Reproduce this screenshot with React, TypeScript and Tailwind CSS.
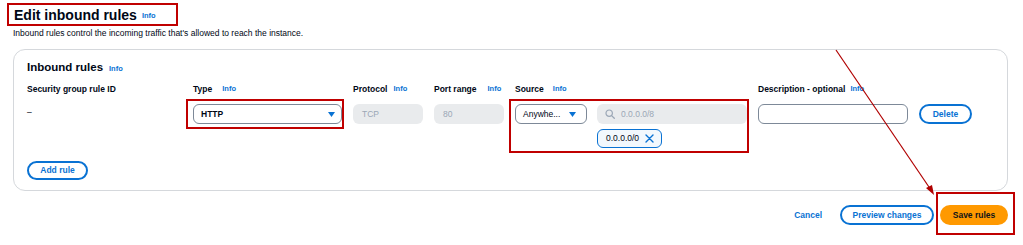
import React from "react";

const Info = ({ className = "" }: { className?: string }) => (
  <span className={`text-[7.5px] font-bold text-[#0972d3] ${className}`}>Info</span>
);

const Caret = () => (
  <svg width="7" height="5" viewBox="0 0 7 5" className="shrink-0">
    <path d="M0 0 H7 L3.5 5 Z" fill="#0972d3" />
  </svg>
);

export default function App() {
  return (
    <div
      className="relative w-[1023px] h-[245px] bg-white overflow-hidden text-[#000716]"
      style={{ fontFamily: '"Liberation Sans", Arial, sans-serif' }}
    >
      {/* Title */}
      <div className="ml-[7px] mt-[3px] flex h-[23px] w-[171px] items-center border-2 border-[#c00000] pl-[5px]">
        <span className="text-[14px] font-bold leading-none">Edit inbound rules</span>
        <Info className="ml-[5px] mt-[3px]" />
      </div>
      <div className="ml-[13px] mt-[1px] text-[8.5px] leading-[12px]">
        Inbound rules control the incoming traffic that's allowed to reach the instance.
      </div>

      {/* Card */}
      <div className="ml-[13px] mt-[10px] w-[995px] h-[142px] rounded-[12px] border border-[#d5d8dc] pl-[13px] pt-[10px]">
        <div className="flex h-[16px] items-center">
          <span className="text-[11.5px] font-bold leading-none">Inbound rules</span>
          <Info className="ml-[6px] mt-[2px]" />
        </div>

        <div className="mt-[7px] grid grid-cols-[155px_149px_70px_70px_232px_150px_auto] gap-x-[11px]">
          {/* headers */}
          <div className="flex h-[12px] items-center text-[8.5px] font-bold">Security group rule ID</div>
          <div className="flex h-[12px] items-center text-[8.5px] font-bold">
            Type <Info className="ml-[10px]" />
          </div>
          <div className="flex h-[12px] items-center text-[8.5px] font-bold">
            Protocol <Info className="ml-[6px]" />
          </div>
          <div className="flex h-[12px] items-center text-[8.5px] font-bold">
            Port range <Info className="ml-[11px]" />
          </div>
          <div className="flex h-[12px] items-center text-[8.5px] font-bold">
            Source <Info className="ml-[9px]" />
          </div>
          <div className="flex h-[12px] items-center text-[8.5px] font-bold">
            Description - optional <Info className="ml-[5px]" />
          </div>
          <div />

          {/* row */}
          <div className="mt-[9px] h-[20px] text-[8.5px] leading-[16px]">–</div>
          <div className="relative mt-[9px]">
            <div className="flex h-[20px] w-[149px] items-center justify-between rounded-[6px] border border-[#7d8998] pl-[7px] pr-[6px] text-[8.5px] font-bold">
              <span>HTTP</span>
              <Caret />
            </div>
            <div className="pointer-events-none absolute left-[-7px] top-[-5px] h-[30px] w-[158px] border-2 border-[#c00000]" />
          </div>
          <div className="mt-[9px] flex h-[20px] items-center rounded-[6px] bg-[#e9ebed] pl-[9px] text-[8.5px] text-[#9ba7b6]">
            TCP
          </div>
          <div className="mt-[9px] flex h-[20px] items-center rounded-[6px] bg-[#e9ebed] pl-[9px] text-[8.5px] text-[#9ba7b6]">
            80
          </div>
          <div className="relative mt-[9px]">
            <div className="flex gap-[10px]">
              <div className="flex h-[20px] w-[72px] items-center rounded-[6px] border border-[#7d8998] pl-[7px] pr-[10px] text-[8.5px]">
                <span className="flex-1">Anywhe...</span>
                <Caret />
              </div>
              <div className="flex h-[20px] w-[150px] items-center rounded-[6px] bg-[#e9ebed] pl-[8px] text-[8.5px] text-[#9ba7b6]">
                <svg width="10" height="10" viewBox="0 0 10 10" className="mr-[6px]">
                  <circle cx="4.2" cy="4.2" r="3.2" fill="none" stroke="#9ba7b6" strokeWidth="1.2" />
                  <path d="M6.6 6.6 L9.3 9.3" stroke="#9ba7b6" strokeWidth="1.3" strokeLinecap="round" />
                </svg>
                0.0.0.0/8
              </div>
            </div>
            <div className="ml-[82px] mt-[5px] flex h-[19px] w-[65px] items-center rounded-[6px] border border-[#0972d3] bg-[#f2f8fd] pl-[8px] text-[8.5px]">
              <span>0.0.0.0/0</span>
              <svg width="9" height="9" viewBox="0 0 9 9" className="ml-[6px]">
                <path d="M1 1 L8 8 M8 1 L1 8" stroke="#0972d3" strokeWidth="1.4" strokeLinecap="round" />
              </svg>
            </div>
            <div className="pointer-events-none absolute left-[-6px] top-[-5px] h-[54px] w-[240px] border-2 border-[#c00000]" />
          </div>
          <div className="mt-[9px] h-[20px] rounded-[6px] border border-[#7d8998]" />
          <div className="mt-[9px]">
            <div className="flex h-[20px] w-[53px] items-center justify-center rounded-full border-2 border-[#0972d3] text-[8.5px] font-bold text-[#0972d3]">
              Delete
            </div>
          </div>
        </div>

        <div className="mt-[13px] flex h-[19px] w-[61px] items-center justify-center rounded-full border-2 border-[#0972d3] text-[8.5px] font-bold text-[#0972d3]">
          Add rule
        </div>
      </div>

      {/* Footer */}
      <div className="mt-[14px] flex items-center justify-end pr-[15px]">
        <span className="mr-[18px] text-[8.5px] font-bold text-[#0972d3]">Cancel</span>
        <div className="flex h-[20px] w-[94px] items-center justify-center rounded-full border-2 border-[#0972d3] text-[8.5px] font-bold text-[#0972d3]">
          Preview changes
        </div>
        <div className="relative ml-[6px]">
          <div className="flex h-[20px] w-[68px] items-center justify-center rounded-full bg-[#ff9900] text-[8.5px] font-bold text-[#0f141a]">
            Save rules
          </div>
          <div className="pointer-events-none absolute left-[-4px] top-[-13px] h-[43px] w-[79px] border-2 border-[#c00000]" />
        </div>
      </div>

      {/* Annotation arrow */}
      <svg className="pointer-events-none absolute left-0 top-0" width="1023" height="245">
        <line x1="836" y1="50" x2="931" y2="190" stroke="#b00000" strokeWidth="1.2" />
        <path d="M934 195 L926 188 L932 185 Z" fill="#b00000" />
      </svg>
    </div>
  );
}
